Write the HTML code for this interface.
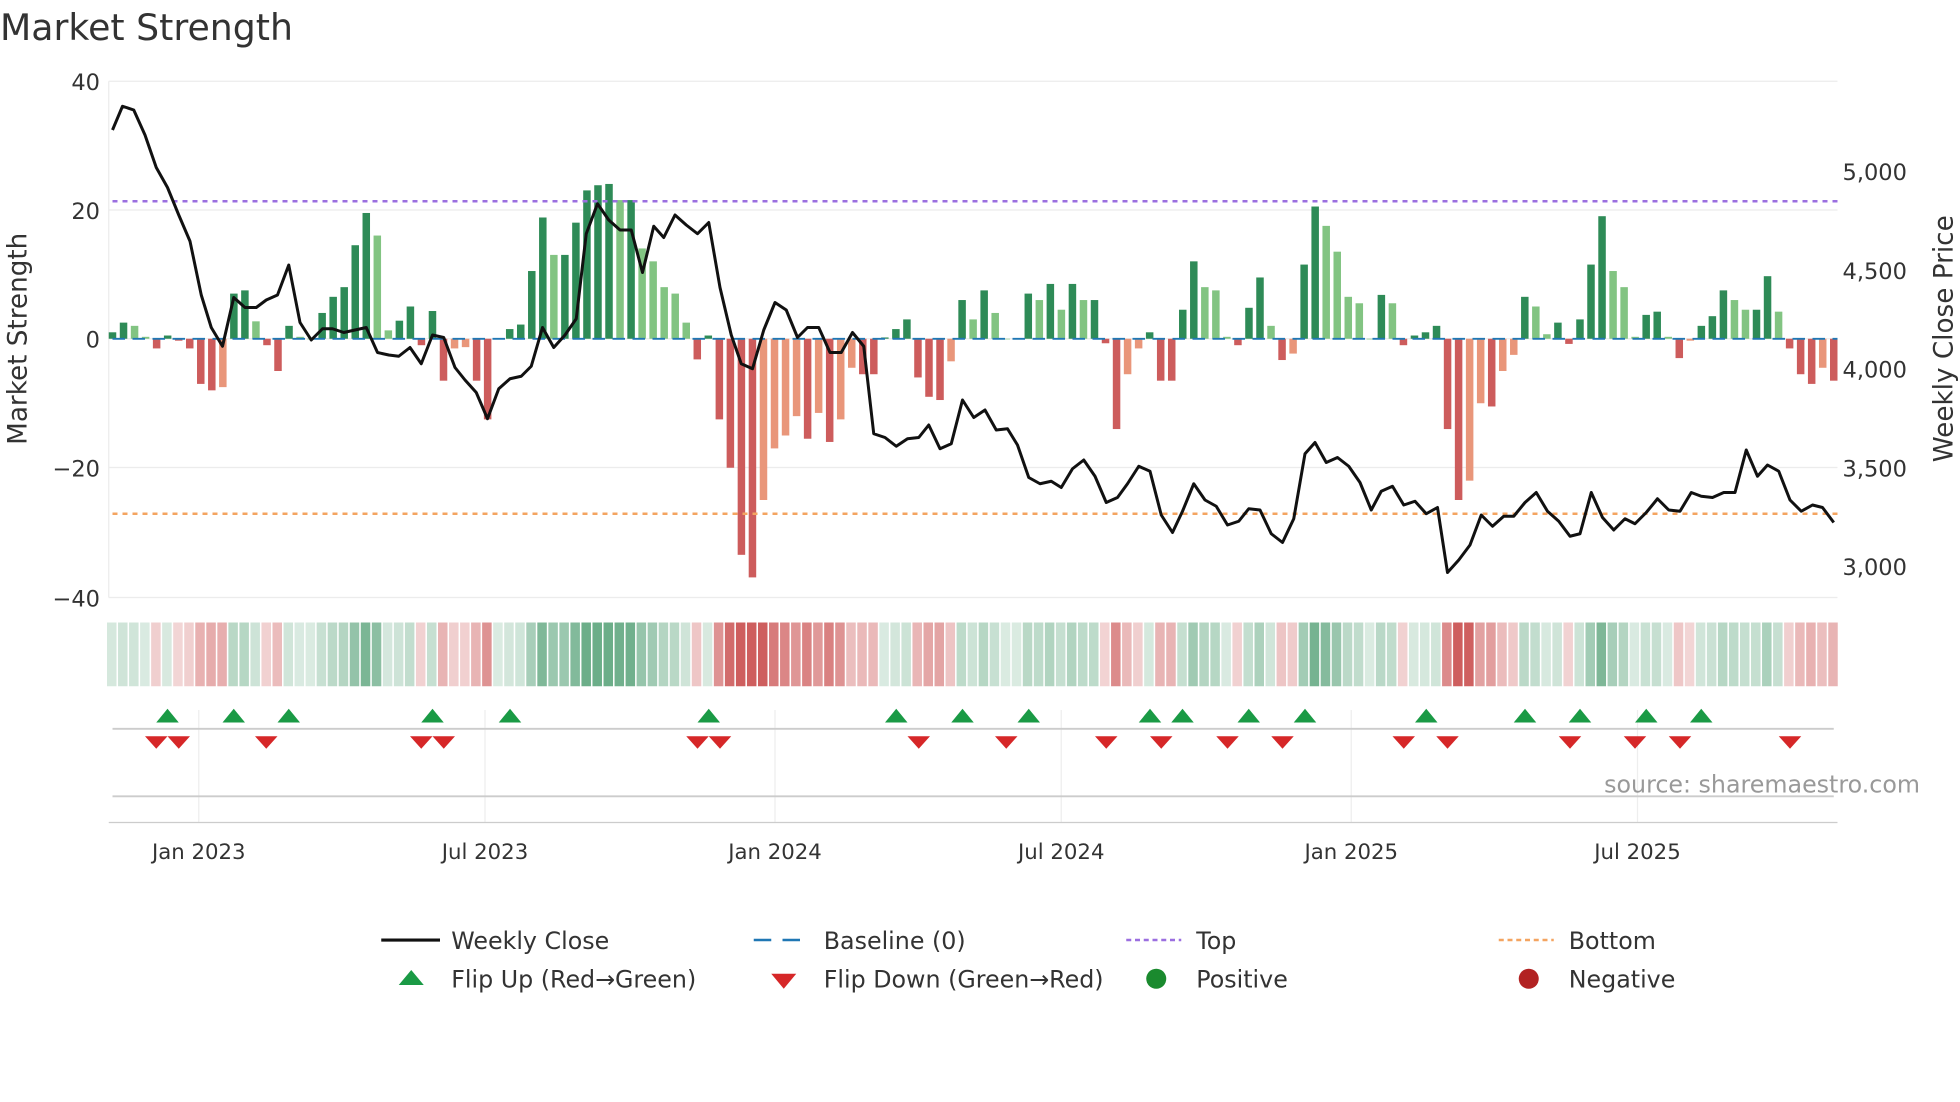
<!DOCTYPE html>
<html><head><meta charset="utf-8"><style>
html,body{margin:0;padding:0;background:#fff;}
svg{display:block;font-family:"DejaVu Sans","Liberation Sans",sans-serif;}
</style></head><body>
<svg id="s" width="1960" height="1102" viewBox="0 0 1568 881.6" xmlns="http://www.w3.org/2000/svg">
<rect width="1568" height="882" fill="#fff"/>
<text x="0" y="32" font-size="29" fill="#333">Market Strength</text>
<g stroke="#ececec" stroke-width="1">
<line x1="87" y1="65" x2="1470" y2="65"/><line x1="87" y1="168" x2="1470" y2="168"/>
<line x1="87" y1="271" x2="1470" y2="271"/><line x1="87" y1="374" x2="1470" y2="374"/>
<line x1="87" y1="478" x2="1470" y2="478"/><line x1="87" y1="65" x2="87" y2="478"/>
</g>
<g font-size="18" fill="#333" text-anchor="end">
<text x="80" y="72">40</text><text x="80" y="175">20</text><text x="80" y="278">0</text>
<text x="80" y="381">−20</text><text x="80" y="485">−40</text></g>
<g font-size="18" fill="#333">
<text x="1474" y="144">5,000</text><text x="1474" y="223">4,500</text><text x="1474" y="302">4,000</text>
<text x="1474" y="381">3,500</text><text x="1474" y="460">3,000</text></g>
<text transform="translate(21,271) rotate(-90)" font-size="21" fill="#333" text-anchor="middle">Market Strength</text>
<text transform="translate(1562,271) rotate(-90)" font-size="21" fill="#333" text-anchor="middle">Weekly Close Price</text>
<g id="bars"></g>
<line x1="90" y1="161" x2="1470" y2="161" stroke="#9b6fe0" stroke-width="2" stroke-dasharray="4,4"/>
<line x1="90" y1="411" x2="1470" y2="411" stroke="#f4a460" stroke-width="2" stroke-dasharray="4,4"/>
<line x1="90" y1="271" x2="1470" y2="271" stroke="#1f77b4" stroke-width="1.5" stroke-dasharray="10,6"/>
<polyline id="price" fill="none" stroke="#111" stroke-width="2.4" stroke-linejoin="round"/>
<g id="heat"></g>
<g stroke="#eee" stroke-width="1">
<line x1="159" y1="568" x2="159" y2="658"/><line x1="388" y1="568" x2="388" y2="658"/>
<line x1="620" y1="568" x2="620" y2="658"/><line x1="849" y1="568" x2="849" y2="658"/>
<line x1="1081" y1="568" x2="1081" y2="658"/><line x1="1310" y1="568" x2="1310" y2="658"/></g>
<line x1="90" y1="583" x2="1467" y2="583" stroke="#ccc" stroke-width="1.5"/>
<line x1="90" y1="637" x2="1467" y2="637" stroke="#ccc" stroke-width="1.5"/>
<line x1="87" y1="658" x2="1470" y2="658" stroke="#ccc" stroke-width="1"/>
<g id="marks"></g>
<text x="1536" y="634" font-size="19" fill="#999" text-anchor="end">source: sharemaestro.com</text>
<g font-size="17" fill="#333" text-anchor="middle">
<text x="159" y="687">Jan 2023</text><text x="388" y="687">Jul 2023</text><text x="620" y="687">Jan 2024</text>
<text x="849" y="687">Jul 2024</text><text x="1081" y="687">Jan 2025</text><text x="1310" y="687">Jul 2025</text></g>
<g font-size="19" fill="#333">
<line x1="305" y1="752" x2="352" y2="752" stroke="#111" stroke-width="2.5"/><text x="361" y="759">Weekly Close</text>
<line x1="603" y1="752" x2="647" y2="752" stroke="#1f77b4" stroke-width="2" stroke-dasharray="14,9"/><text x="659" y="759">Baseline (0)</text>
<line x1="901" y1="752" x2="945" y2="752" stroke="#9b6fe0" stroke-width="2" stroke-dasharray="4,3"/><text x="957" y="759">Top</text>
<line x1="1199" y1="752" x2="1243" y2="752" stroke="#f4a460" stroke-width="2" stroke-dasharray="4,3"/><text x="1255" y="759">Bottom</text>
<polygon points="319,788 339,788 329,776" fill="#1a9a45"/><text x="361" y="790">Flip Up (Red→Green)</text>
<polygon points="617,779 637,779 627,791" fill="#d62728"/><text x="659" y="790">Flip Down (Green→Red)</text>
<circle cx="925" cy="783" r="8" fill="#1a8a2e"/><text x="957" y="790">Positive</text>
<circle cx="1223" cy="783" r="8" fill="#b22222"/><text x="1255" y="790">Negative</text>
</g>
</svg>
<script>
var v=[1,2.5,2,0.3,-1.5,0.5,-0.3,-1.5,-7,-8,-7.5,7,7.5,2.7,-1,-5,2,0.3,0,4,6.5,8,14.5,19.5,16,1.3,2.8,5,-1,4.3,-6.5,-1.5,-1.3,-6.5,-12.5,0,1.5,2.2,10.5,18.8,13,13,18,23,23.8,24,21.5,21.5,14,12,8,7,2.5,-3.2,0.5,-12.5,-20,-33.5,-37,-25,-17,-15,-12,-15.5,-11.5,-16,-12.5,-4.5,-5.5,-5.5,0.2,1.5,3,-6,-9,-9.5,-3.5,6,3,7.5,4,0,0,7,6,8.5,4.5,8.5,6,6,-0.7,-14,-5.5,-1.5,1,-6.5,-6.5,4.5,12,8,7.5,0.3,-1,4.8,9.5,2,-3.3,-2.3,11.5,20.5,17.5,13.5,6.5,5.5,0,6.8,5.5,-1,0.5,1,2,-14,-25,-22,-10,-10.5,-5,-2.5,6.5,5,0.7,2.5,-0.8,3,11.5,19,10.5,8,0.3,3.7,4.2,0.3,-3,-0.3,2,3.5,7.5,6,4.5,4.5,9.7,4.2,-1.5,-5.5,-7,-4.5,-6.5];
var p=[[90,104],[98,85],[107,88],[116,108],[125,134],[134,150],[143,172],[152,193],[161,236],[169,262],[178,277],[187,238],[196,246],[205,246],[213,240],[222,236],[231,212],[240,258],[249,272],[258,263],[266,263],[275,266],[284,264],[293,262],[302,282],[311,284],[319,285],[328,278],[337,291],[346,268],[355,270],[364,294],[372,304],[381,314],[390,335],[399,311],[408,303],[417,301],[425,293],[434,262],[443,278],[452,268],[461,255],[469,187],[478,163],[487,176],[496,184],[505,184],[514,218],[523,181],[531,190],[540,172],[549,180],[558,187],[567,178],[576,230],[585,268],[593,291],[602,295],[611,264],[620,242],[629,248],[638,270],[646,262],[655,262],[664,282],[673,282],[682,266],[691,277],[699,347],[708,350],[717,357],[726,351],[735,350],[743,340],[752,359],[761,355],[770,320],[779,334],[788,328],[797,344],[806,343],[814,356],[823,382],[832,387],[841,385],[849,390],[858,375],[867,368],[876,381],[885,402],[894,398],[902,387],[911,373],[920,377],[929,412],[938,426],[946,409],[955,387],[964,400],[973,405],[982,420],[991,417],[999,407],[1008,408],[1017,427],[1026,434],[1035,415],[1044,363],[1052,354],[1061,370],[1070,366],[1079,373],[1088,386],[1097,408],[1105,393],[1114,389],[1123,404],[1132,401],[1141,411],[1150,406],[1158,458],[1167,448],[1176,436],[1185,412],[1194,421],[1203,413],[1211,413],[1220,402],[1229,394],[1238,409],[1247,417],[1256,429],[1264,427],[1273,394],[1282,414],[1291,424],[1300,415],[1308,419],[1317,410],[1326,399],[1335,408],[1344,409],[1353,394],[1361,397],[1370,398],[1379,394],[1388,394],[1397,360],[1406,381],[1414,372],[1423,377],[1432,400],[1441,409],[1450,404],[1458,406],[1467,418]];
var NS="http://www.w3.org/2000/svg";
function el(t,a,par){var e=document.createElementNS(NS,t);for(var k in a)e.setAttribute(k,a[k]);document.getElementById(par).appendChild(e);return e;}
var n=v.length,step=(1467-90)/(n-1);
for(var i=0;i<n;i++){
 var x=90+i*step,val=v[i],prev=i?v[i-1]:0,h=Math.abs(val)*5.16,y=val>=0?271-h:271;
 var c;
 if(val>=0)c=(val>=prev)?"#2e8b57":"#82c482";else c=(val<=prev)?"#cd5c5c":"#e9967a";
 el("rect",{x:x-3,y:y,width:6,height:Math.max(h,0.5),fill:c},"bars");
 var a=Math.min(1,0.25+Math.abs(val)/30);
 var hc=val>=0?"rgba(46,139,87,"+a*0.7+")":"rgba(190,40,40,"+a*0.75+")";
 el("rect",{x:x-4.4,y:498,width:7.6,height:51,fill:hc},"heat");
}
document.getElementById("price").setAttribute("points",p.map(function(q){return q.join(",")}).join(" "));
[134,187,231,346,408,567,717,770,823,920,946,999,1044,1141,1220,1264,1317,1361].forEach(function(x){el("polygon",{points:(x-9)+",578 "+(x+9)+",578 "+x+",567",fill:"#1a9a45"},"marks");});
[125,143,213,337,355,558,576,735,805,885,929,982,1026,1123,1158,1256,1308,1344,1432].forEach(function(x){el("polygon",{points:(x-9)+",589 "+(x+9)+",589 "+x+",599",fill:"#d62728"},"marks");});
</script>
</body></html>
